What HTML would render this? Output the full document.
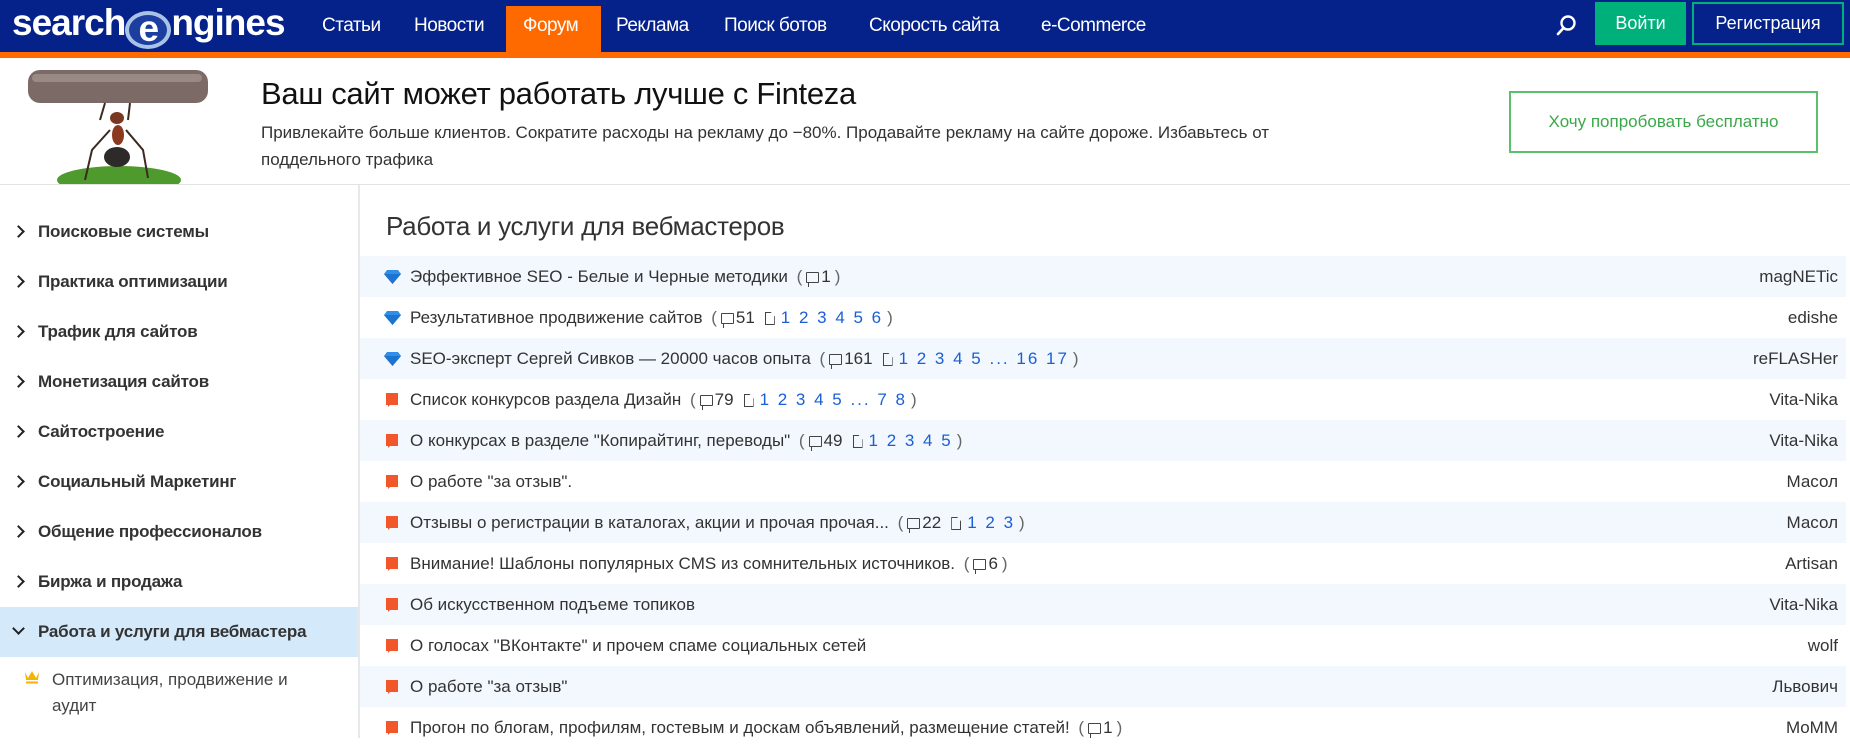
<!DOCTYPE html>
<html><head><meta charset="utf-8"><style>
*{margin:0;padding:0;box-sizing:border-box}
body{width:1850px;height:738px;overflow:hidden;background:#fff;font-family:"Liberation Sans","Noto Sans CJK SC",sans-serif;color:#333;position:relative}
.nav{position:absolute;left:0;top:0;width:1850px;height:52px;background:#05218a}
.stripe{position:absolute;left:0;top:52px;width:1850px;height:6px;background:#ff6a00}
.ni{position:absolute;top:15px;color:#fff;font-size:19px;letter-spacing:-0.5px}
.forum{position:absolute;left:506px;top:6px;width:95px;height:48px;background:#ff6a00}
.logo{position:absolute;left:12px;top:2px;color:#fff;font-weight:bold;font-size:37px;letter-spacing:-1px;font-family:"Liberation Sans",sans-serif}
.btn1{position:absolute;left:1595px;top:2px;width:91px;height:43px;background:#00b07b;color:#fff;font-size:18px;text-align:center;line-height:43px}
.btn2{position:absolute;left:1692px;top:2px;width:152px;height:43px;border:2px solid #00b07b;color:#fff;font-size:18px;text-align:center;line-height:39px}
.banner-b{position:absolute;left:0;top:184px;width:1850px;height:1px;background:#e3e3e3}
.t1{position:absolute;left:261px;top:76px;font-size:31px;color:#111;letter-spacing:-0.3px}
.t2{position:absolute;left:261px;top:119px;font-size:17px;color:#333;line-height:27px;width:1100px}
.try{position:absolute;left:1509px;top:91px;width:309px;height:62px;border:2px solid #5cc06a;color:#3aa84a;font-size:17px;text-align:center;line-height:58px}
.side{position:absolute;left:0;top:185px;width:360px;height:553px;border-right:2px solid #e8e8e8}
.si{position:absolute;left:0;width:358px;height:50px;line-height:50px;padding-left:38px;font-size:17px;font-weight:bold;color:#333;letter-spacing:-0.2px}
.si:before{content:"";position:absolute;left:14px;top:20px;width:7px;height:7px;border-top:2.5px solid #222;border-right:2.5px solid #222;transform:rotate(45deg)}
.si.act{background:#d4eafb}
.si.act:before{transform:rotate(135deg);top:17px}
.h{position:absolute;left:386px;top:211px;font-size:26px;color:#333;letter-spacing:-0.3px}
.row{position:absolute;left:360px;width:1486px;height:41px;line-height:41px;font-size:17px;padding-left:50px;color:#333;white-space:nowrap}
.row.s{background:#f3f8fe}
.row .u{position:absolute;right:8px;top:0}
.dia{position:absolute;left:24px;top:14px;width:17px;height:14px}
.fl{position:absolute;left:26px;top:14px;width:12px;height:14px}
.b{color:#1a5fd6;letter-spacing:2px}
.g{color:#666;margin-left:4px}
.ci{display:inline-block;width:13px;height:11px;border:1.6px solid #444;border-radius:1px;position:relative;margin:0 2px 0 4px;vertical-align:-1px}
.ci:after{content:"";position:absolute;left:1px;bottom:-5px;width:3px;height:4px;border-left:1.6px solid #444}
.pi{display:inline-block;width:10px;height:13px;border:1.5px solid #444;margin:0 6px 0 10px;vertical-align:-2px;clip-path:polygon(0 0,60% 0,100% 35%,100% 100%,0 100%)}
</style></head><body>
<div class="nav"></div><div class="stripe"></div>
<div class="forum"></div>
<div class="logo">search<span style="display:inline-block;width:46px;height:38px;border:4px solid #a9c3e6;border-radius:50%;vertical-align:-6px;text-align:center;line-height:28px;background:#1b3ea0">e</span>ngines</div>
<div class="ni" style="left:322px">Статьи</div>
<div class="ni" style="left:414px">Новости</div>
<div class="ni" style="left:523px">Форум</div>
<div class="ni" style="left:616px">Реклама</div>
<div class="ni" style="left:724px">Поиск ботов</div>
<div class="ni" style="left:869px">Скорость сайта</div>
<div class="ni" style="left:1041px">e-Commerce</div>
<svg style="position:absolute;left:1555px;top:14px" width="22" height="24" viewBox="0 0 22 24"><circle cx="13" cy="9" r="6.5" fill="none" stroke="#fff" stroke-width="2.4"/><path d="M8.5 14 L3 20" stroke="#fff" stroke-width="2.6" stroke-linecap="round"/></svg>
<div class="btn1">Войти</div>
<div class="btn2">Регистрация</div>

<svg style="position:absolute;left:0;top:60px" width="210" height="125" viewBox="0 60 210 125">
<ellipse cx="119" cy="180" rx="62" ry="14" fill="#4f9a2c"/>
<rect x="28" y="70" width="180" height="33" rx="12" fill="#7b6a66"/>
<rect x="32" y="74" width="170" height="8" rx="4" fill="#9a8a86"/>
<path d="M105 103 L100 120 M130 103 L128 120 M110 130 L92 150 L85 180 M126 130 L143 150 L148 178" stroke="#3a2a22" stroke-width="2" fill="none"/>
<ellipse cx="117" cy="118" rx="7" ry="6" fill="#7a3822"/>
<ellipse cx="118" cy="135" rx="6" ry="10" fill="#8b3a20"/>
<ellipse cx="117" cy="157" rx="13" ry="10" fill="#2e2a2a"/>
</svg>
<div class="t1">Ваш сайт может работать лучше с Finteza</div>
<div class="t2">Привлекайте больше клиентов. Сократите расходы на рекламу до −80%. Продавайте рекламу на сайте дороже. Избавьтесь от поддельного трафика</div>
<div class="try">Хочу попробовать бесплатно</div>
<div class="banner-b"></div>

<div class="side">
<div class="si" style="top:22px">Поисковые системы</div>
<div class="si" style="top:72px">Практика оптимизации</div>
<div class="si" style="top:122px">Трафик для сайтов</div>
<div class="si" style="top:172px">Монетизация сайтов</div>
<div class="si" style="top:222px">Сайтостроение</div>
<div class="si" style="top:272px">Социальный Маркетинг</div>
<div class="si" style="top:322px">Общение профессионалов</div>
<div class="si" style="top:372px">Биржа и продажа</div>
<div class="si act" style="top:422px">Работа и услуги для вебмастера</div>
<svg style="position:absolute;left:24px;top:485px" width="16" height="14" viewBox="0 0 16 14"><path d="M1 2 L4 8 L8 1 L12 8 L15 2 L14 10 L2 10 Z" fill="#f5b400"/><rect x="2" y="11.5" width="12" height="2" fill="#f5b400"/></svg>
<div style="position:absolute;left:52px;top:482px;font-size:17px;line-height:26px;color:#444;width:245px">Оптимизация, продвижение и аудит</div>
</div>

<div class="h">Работа и услуги для вебмастеров</div>
<svg width="0" height="0" style="position:absolute"><defs>
<symbol id="d" viewBox="0 0 17 14"><path d="M3 0 H14 L17 4 L8.5 14 L0 4 Z" fill="#2f8fe8"/><path d="M0 4 H17 L8.5 14 Z" fill="#1d74d0"/></symbol>
<symbol id="f" viewBox="0 0 12 14"><path d="M0 0 H12 V12 H4 L2 14 V12 H0 Z" fill="#f2572b"/></symbol>
</defs></svg>

<div class="row s" style="top:256px"><svg class="dia"><use href="#d"/></svg>Эффективное SEO - Белые и Черные методики <span class="g">(</span><span class="ci"></span>1<span class="g">)</span><span class="u">magNETic</span></div>
<div class="row" style="top:297px"><svg class="dia"><use href="#d"/></svg>Результативное продвижение сайтов <span class="g">(</span><span class="ci"></span>51<span class="pi"></span><span class="b">1 2 3 4 5 6</span><span class="g">)</span><span class="u">edishe</span></div>
<div class="row s" style="top:338px"><svg class="dia"><use href="#d"/></svg>SEO-эксперт Сергей Сивков — 20000 часов опыта <span class="g">(</span><span class="ci"></span>161<span class="pi"></span><span class="b">1 2 3 4 5 ... 16 17</span><span class="g">)</span><span class="u">reFLASHer</span></div>
<div class="row" style="top:379px"><svg class="fl"><use href="#f"/></svg>Список конкурсов раздела Дизайн <span class="g">(</span><span class="ci"></span>79<span class="pi"></span><span class="b">1 2 3 4 5 ... 7 8</span><span class="g">)</span><span class="u">Vita-Nika</span></div>
<div class="row s" style="top:420px"><svg class="fl"><use href="#f"/></svg>О конкурсах в разделе "Копирайтинг, переводы" <span class="g">(</span><span class="ci"></span>49<span class="pi"></span><span class="b">1 2 3 4 5</span><span class="g">)</span><span class="u">Vita-Nika</span></div>
<div class="row" style="top:461px"><svg class="fl"><use href="#f"/></svg>О работе "за отзыв".<span class="u">Масол</span></div>
<div class="row s" style="top:502px"><svg class="fl"><use href="#f"/></svg>Отзывы о регистрации в каталогах, акции и прочая прочая... <span class="g">(</span><span class="ci"></span>22<span class="pi"></span><span class="b">1 2 3</span><span class="g">)</span><span class="u">Масол</span></div>
<div class="row" style="top:543px"><svg class="fl"><use href="#f"/></svg>Внимание! Шаблоны популярных CMS из сомнительных источников. <span class="g">(</span><span class="ci"></span>6<span class="g">)</span><span class="u">Artisan</span></div>
<div class="row s" style="top:584px"><svg class="fl"><use href="#f"/></svg>Об искусственном подъеме топиков<span class="u">Vita-Nika</span></div>
<div class="row" style="top:625px"><svg class="fl"><use href="#f"/></svg>О голосах "ВКонтакте" и прочем спаме социальных сетей<span class="u">wolf</span></div>
<div class="row s" style="top:666px"><svg class="fl"><use href="#f"/></svg>О работе "за отзыв"<span class="u">Львович</span></div>
<div class="row" style="top:707px"><svg class="fl"><use href="#f"/></svg>Прогон по блогам, профилям, гостевым и доскам объявлений, размещение статей! <span class="g">(</span><span class="ci"></span>1<span class="g">)</span><span class="u">MoMM</span></div>
</body></html>
